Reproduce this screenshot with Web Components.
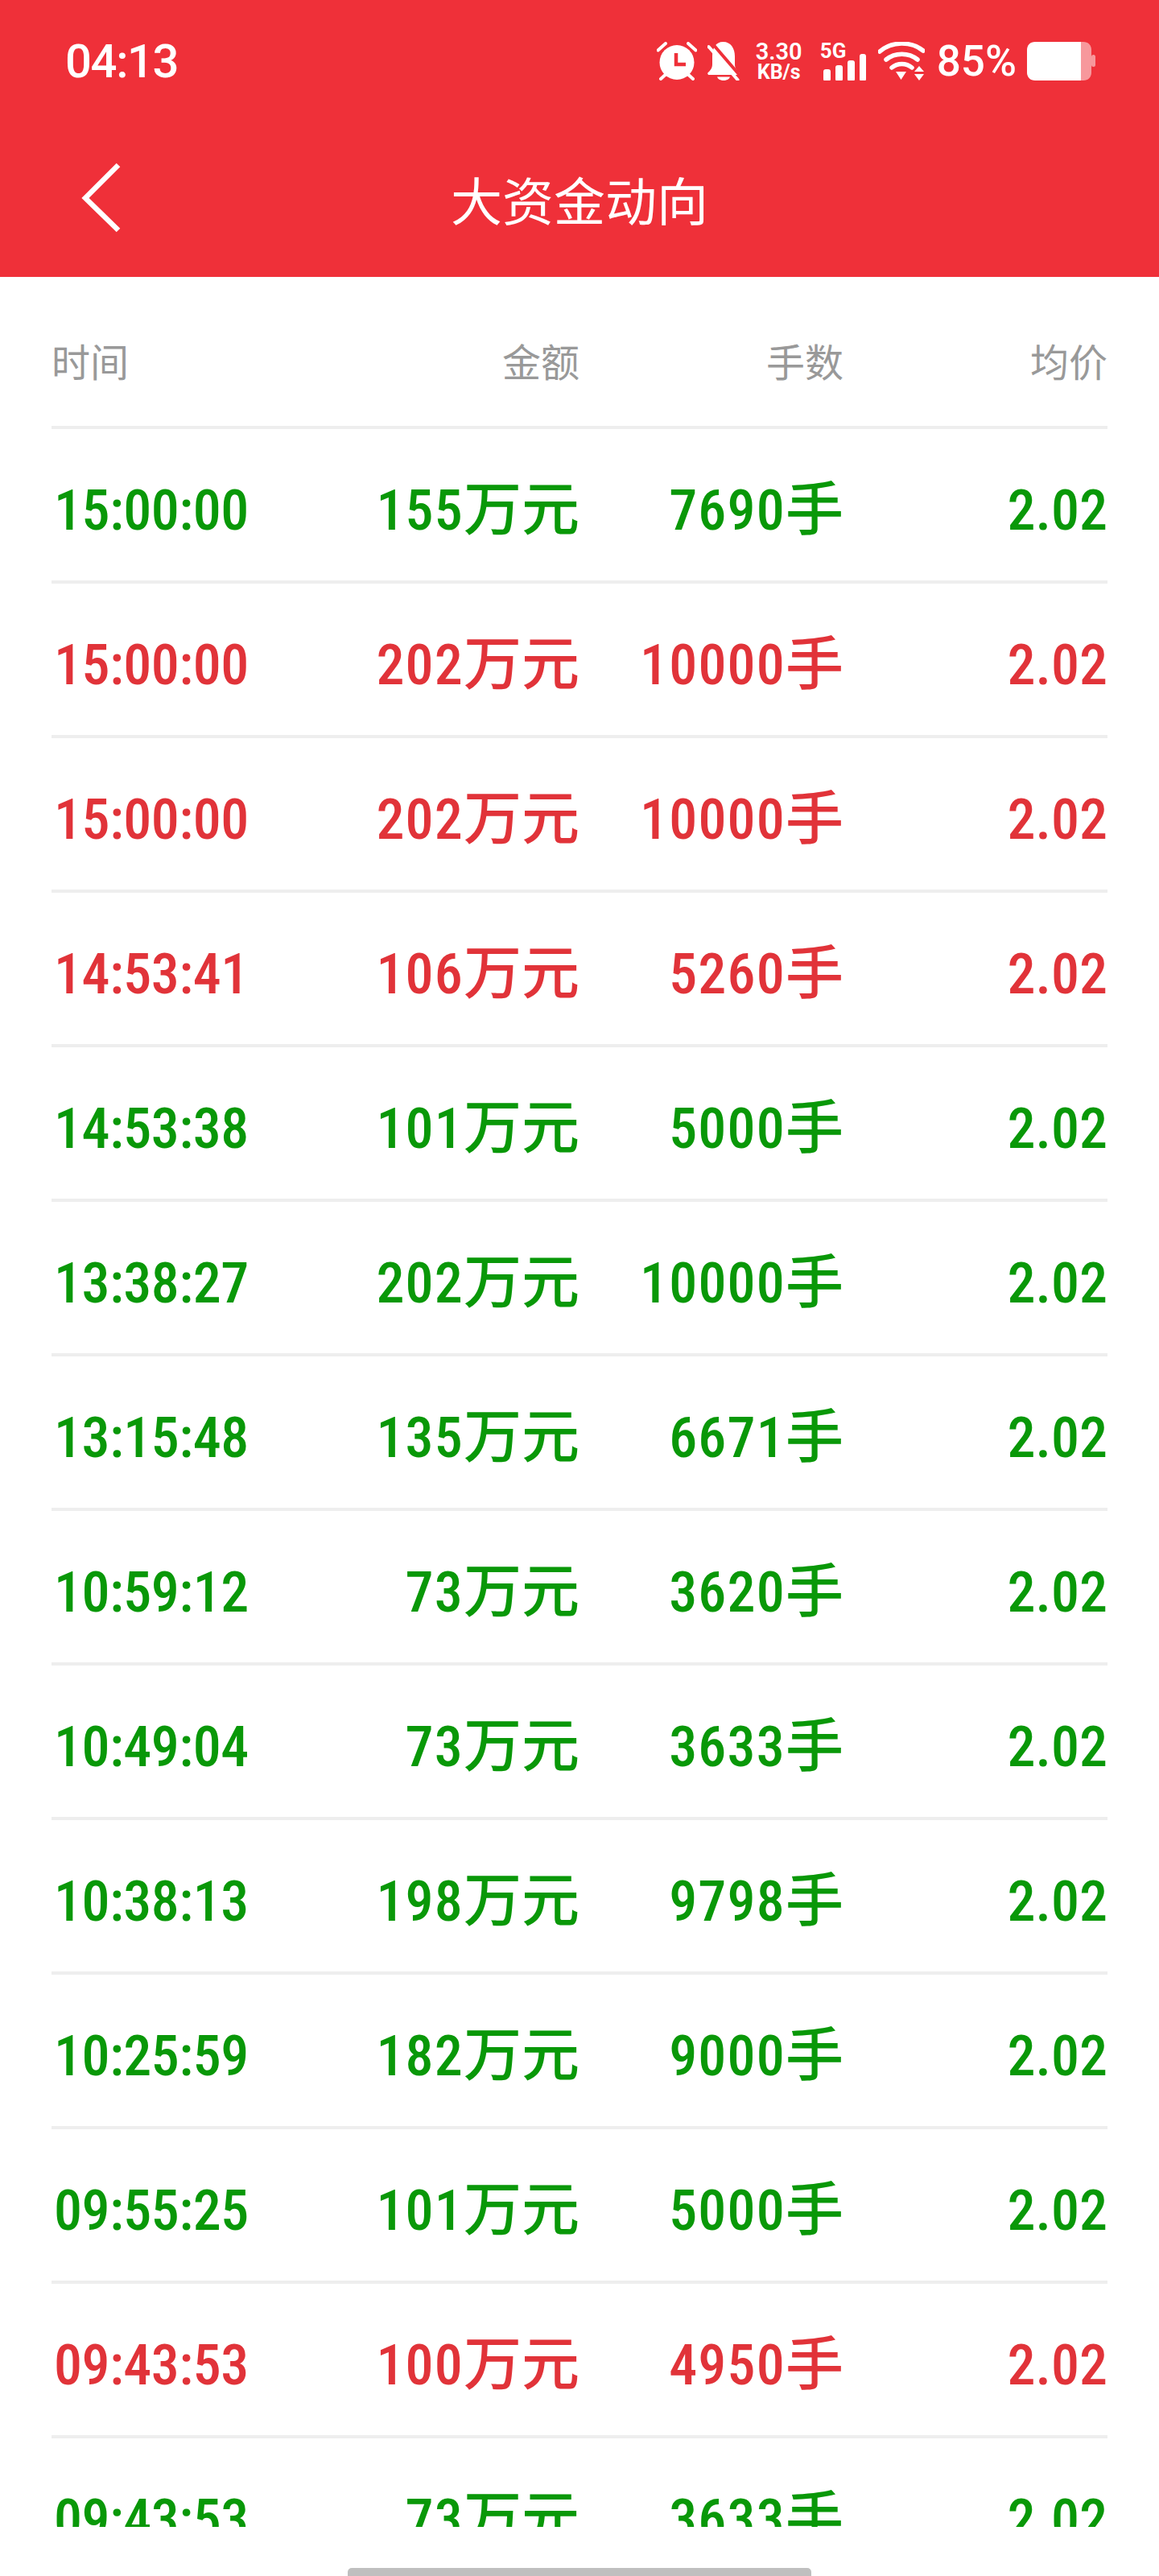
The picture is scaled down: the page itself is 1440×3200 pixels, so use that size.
<!doctype html>
<html lang="zh"><head><meta charset="utf-8"><title>大资金动向</title>
<style>html,body{margin:0;padding:0;background:#fff}</style></head>
<body>
<money-screen></money-screen>
<script>
const RED='#ef3039';
class StatusBar extends HTMLElement{
  constructor(){super();this.attachShadow({mode:'open'}).innerHTML=`<style>
  :host{display:flex;align-items:center;height:152px;padding:0 79px 0 81px;color:#fff;font-family:Roboto,"Liberation Sans",sans-serif}
  svg{display:block;flex:none}
  .time{font-size:58px;font-weight:500;font-stretch:89%;letter-spacing:-1.4px;line-height:1;margin-right:auto}
  .speed{display:flex;flex-direction:column;align-items:center;width:58px;margin-left:20px}
  .speed b{font-size:29px;line-height:28px;font-weight:600;font-stretch:92%}
  .speed i{font-style:normal;font-size:25px;line-height:24px;font-weight:700;font-stretch:90%}
  .net{position:relative;width:53px;height:48px;margin-left:26px}
  .net span{position:absolute;left:-4px;top:-2px;font-size:26px;line-height:26px;font-weight:700}
  .pct{font-size:53px;font-weight:500;line-height:1;margin-left:15px}
  </style>
  <div class="time">04:13</div>
  <svg width="50" height="48" viewBox="0 0 50 48" fill="none"><circle cx="25" cy="25.500" r="21.500" fill="#fff"/><path d="M1.500 10.500 11 2M48.500 10.500 39 2M5 46l6-5.500M45 46l-6-5.500" stroke="#fff" stroke-width="4" stroke-linecap="round"/><path d="M24 14v14h12" stroke="${RED}" stroke-width="4.500"/></svg>
  <svg style="margin-left:13px" width="40" height="48" viewBox="0 0 40 48"><path d="M19.500 0C10 0 6 8 6 18v10c0 5-3 8-6 11l1 2h38l1-2c-3-3-6-6-6-11V18C34 8 29 0 19.500 0Z" fill="#fff"/><path d="M12 43.500h16c-2 6-14 6-16 0Z" fill="#fff"/><path d="M6 2l37 43" stroke="${RED}" stroke-width="4"/><path d="M1.500 6l36 41" stroke="#fff" stroke-width="4" stroke-linecap="round"/></svg>
  <div class="speed"><b>3.30</b><i>KB/s</i></div>
  <div class="net"><span>5G</span><svg width="53" height="48" viewBox="0 0 53 48" fill="#fff"><rect x="0" y="34" width="9" height="15" rx="3"/><rect x="15" y="29" width="9" height="20" rx="3"/><rect x="30" y="23" width="9" height="26" rx="3"/><rect x="45" y="15" width="8" height="34" rx="3"/></svg></div>
  <svg style="margin-left:15px" width="58" height="48" viewBox="0 0 58 48" fill="none"><path d="M2 12C17-1 41-1 56 11M10 22c11-9 28-9 39 0M17 32c7-6 18-6 25 0" stroke="#fff" stroke-width="5.500" stroke-linecap="round"/><path d="M22 37h13l-6.500 10ZM45 37h12l-6-7ZM45 40h12l-6 8Z" fill="#fff"/></svg>
  <div class="pct">85%</div>
  <svg style="margin-left:13px" width="85" height="48" viewBox="0 0 85 48"><path d="M67 0h3c6 0 10 4 10 10v28c0 6-4 10-10 10h-3Z" fill="#fff" fill-opacity=".5"/><rect x="80" y="16" width="5" height="15" rx="2.500" fill="#fff" fill-opacity=".5"/><path d="M10 0h57v48H10C4 48 0 44 0 38V10C0 4 4 0 10 0Z" fill="#fff"/></svg>`;}
}
class NavBar extends HTMLElement{
  constructor(){super();this.attachShadow({mode:'open'}).innerHTML=`<style>
  :host{display:flex;align-items:center;justify-content:center;position:relative;box-sizing:border-box;height:192px;padding-bottom:4px;color:#fff}
  svg{position:absolute;left:100px;top:48px}
  h1{margin:0;font:400 64px/1 "Noto Sans CJK SC","Noto Sans",sans-serif}
  </style><svg width="52" height="90" viewBox="0 0 52 90" fill="none"><path d="M47 5 6 46l41 40" stroke="#fff" stroke-width="6.500"/></svg><h1><slot></slot></h1>`;}
}
class AppHeader extends HTMLElement{
  constructor(){super();this.attachShadow({mode:'open'}).innerHTML=`<style>:host{display:block;background:${RED}}</style><status-bar></status-bar><nav-bar>大资金动向</nav-bar>`;}
}
class FlowHead extends HTMLElement{
  constructor(){super();this.attachShadow({mode:'open'}).innerHTML=`<style>
  :host{display:grid;grid-template-columns:repeat(4,1fr);box-sizing:border-box;height:189px;padding-top:75px;border-bottom:4px solid #eee;color:#999;font:400 48px/56px "Noto Sans CJK SC","Noto Sans",sans-serif}
  div{text-align:right}div.t{text-align:left}
  </style><div class="t">时间</div><div>金额</div><div>手数</div><div>均价</div>`;}
}
class FlowRow extends HTMLElement{
  constructor(){super();const a=k=>this.getAttribute(k);
    this.attachShadow({mode:'open'}).innerHTML=`<style>
  :host{display:grid;grid-template-columns:repeat(4,1fr);align-items:baseline;box-sizing:border-box;height:192px;padding-top:54px;border-bottom:4px solid #eee;font:500 70px/80px Roboto,"Noto Sans CJK SC",sans-serif;font-stretch:80%}
  :host([dir-type=buy]){color:#e13339}
  :host([dir-type=sell]){color:#099808}
  div{text-align:right;white-space:nowrap}div.t{text-align:left;padding-left:3px;letter-spacing:-.5px}
  div.n{letter-spacing:1.2px}
  .cjk{font:500 72px/80px "Noto Sans CJK SC",sans-serif;letter-spacing:0}
  </style><div class="t">${a('time')}</div><div class="n">${a('amount')}<span class="cjk">万元</span></div><div class="n">${a('vol')}<span class="cjk">手</span></div><div>${a('price')}</div>`;}
}
class FlowTable extends HTMLElement{
  constructor(){super();const rows=[
  ['sell','15:00:00','155','7690'],['buy','15:00:00','202','10000'],['buy','15:00:00','202','10000'],['buy','14:53:41','106','5260'],
  ['sell','14:53:38','101','5000'],['sell','13:38:27','202','10000'],['sell','13:15:48','135','6671'],['sell','10:59:12','73','3620'],
  ['sell','10:49:04','73','3633'],['sell','10:38:13','198','9798'],['sell','10:25:59','182','9000'],['sell','09:55:25','101','5000'],
  ['buy','09:43:53','100','4950'],['sell','09:43:53','73','3633']];
    this.attachShadow({mode:'open'}).innerHTML=`<style>
  :host{display:block;height:2795px;overflow:hidden;padding:0 64px}
  </style><flow-head></flow-head>`+rows.map(r=>`<flow-row dir-type="${r[0]}" time="${r[1]}" amount="${r[2]}" vol="${r[3]}" price="2.02"></flow-row>`).join('');}
}
class HomeBar extends HTMLElement{
  constructor(){super();this.attachShadow({mode:'open'}).innerHTML=`<style>
  :host{display:flex;justify-content:center;align-items:flex-end;height:61px}
  i{display:block;width:576px;height:10px;background:#bfbfbf;border-radius:5px 5px 0 0}
  </style><i></i>`;}
}
class MoneyScreen extends HTMLElement{
  constructor(){super();this.attachShadow({mode:'open'}).innerHTML=`<style>:host{display:block;width:1440px;height:3200px;overflow:hidden;background:#fff}</style><app-header></app-header><flow-table></flow-table><home-bar></home-bar>`;}
}
customElements.define('status-bar',StatusBar);
customElements.define('nav-bar',NavBar);
customElements.define('app-header',AppHeader);
customElements.define('flow-head',FlowHead);
customElements.define('flow-row',FlowRow);
customElements.define('flow-table',FlowTable);
customElements.define('home-bar',HomeBar);
customElements.define('money-screen',MoneyScreen);
</script>
</body></html>
